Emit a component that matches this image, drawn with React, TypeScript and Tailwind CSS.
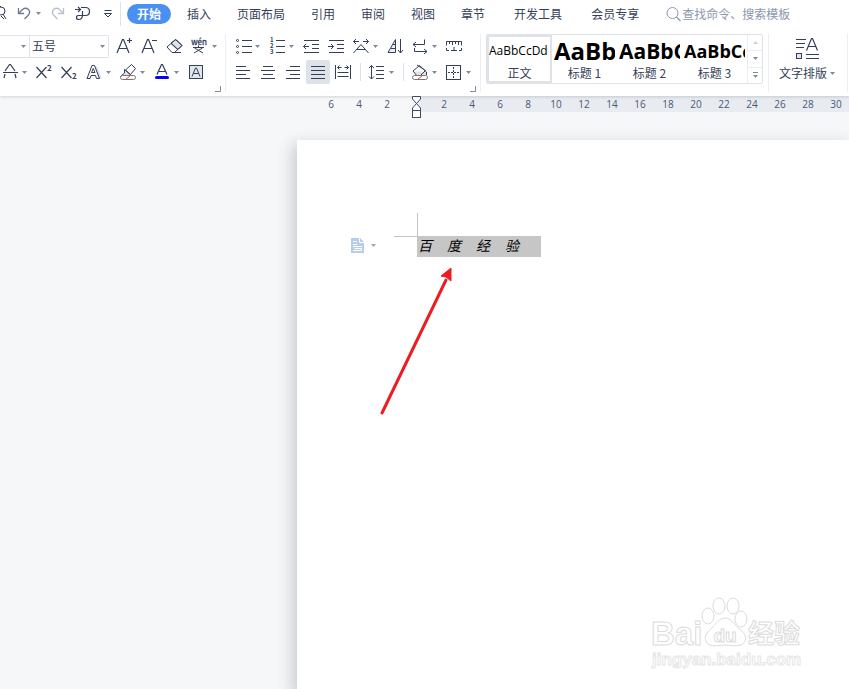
import type { ReactNode } from 'react';
import clsx from 'clsx';

const TABS = [
  { label: '开始', className: 'mx-[3px] rounded-full bg-[#4a90f2] px-[10px] font-bold text-white' },
  { label: '插入', className: 'px-[13px]' },
  { label: '页面布局', className: 'px-[13px]' },
  { label: '引用', className: 'px-[13px]' },
  { label: '审阅', className: 'px-[13px]' },
  { label: '视图', className: 'px-[13px]' },
  { label: '章节', className: 'px-[13px]' },
  { label: '开发工具', className: 'pr-[13px] pl-4' },
  { label: '会员专享', className: 'pr-[13px] pl-4' },
];

const STYLES = [
  { label: '正文', sample: 'AaBbCcDd', className: 'text-xs' },
  { label: '标题 1', sample: 'AaBb', className: 'text-2xl font-bold' },
  { label: '标题 2', sample: 'AaBbC', className: 'text-[21px] font-bold' },
  { label: '标题 3', sample: 'AaBbCc', className: 'text-lg font-bold' },
];

const RULER_LEFT = [6, 4, 2];
const RULER_RIGHT = [2, 4, 6, 8, 10, 12, 14, 16, 18, 20, 22, 24, 26, 28, 30];

const ICONS: Record<string, ReactNode> = {
  find: (
    <>
      <circle cx="14" cy="9" r="4"/>
      <path d="M16 12 L19 17 M10 5 L14 4.5 M14 14 L17 17"/>
    </>
  ),
  undo: (
    <g stroke="#6d7994" strokeWidth="1.3">
      <path d="M6.5 6 V11.5 H12"/>
      <path d="M7 11 L10.5 7.5 Q13.5 5 16.5 7.5 Q19 10.5 16 13.5 L12.5 17"/>
    </g>
  ),
  redo: (
    <g stroke="#b9bfca" strokeWidth="1.3">
      <path d="M17.5 6 V11.5 H12"/>
      <path d="M17 11 L13.5 7.5 Q10.5 5 7.5 7.5 Q5 10.5 8 13.5 L11.5 17"/>
    </g>
  ),
  painter: (
    <g strokeWidth="1.2">
      <path d="M4 7.5 H9 M7 5 L9.5 7.5 L7 10"/>
      <path d="M10 5.5 H14.500 Q18.5 5.5 18.5 9.500 Q18.5 13.5 14.500 13.5 H7.500 Q5.5 13.5 5.5 15.5 Q5.5 17.5 7.500 17.5 Q11.5 17.5 11.5 13 V9"/>
    </g>
  ),
  more: (
    <>
      <path d="M8.5 8.5 H15.5"/>
      <path d="M8.5 11.5 H15.5 L12 15 Z"/>
    </>
  ),
  grow: <path d="M4 19 L9.5 5.5 H10.5 L16 19 M6 14.5 H14 M14 6.5 H19 M16.5 4 V9" strokeWidth="1.2"/>,
  shrink: <path d="M4 19 L9.5 5.5 H10.5 L16 19 M6 14.5 H14 M14 6.5 H19" strokeWidth="1.2"/>,
  eraser: (
    <>
      <path d="M8 9 L13 5.5 L19 11.5 L15 15.5 Z" fill="#dfe3e9"/>
      <path d="M4 13 L12.5 5.5 L19 11.5 L11.5 18.5 H9 Z M8 9.5 L14.5 15.5 M9 18.5 H18"/>
    </>
  ),
  phonetic: (
    <>
      <text x="11" y="11" textAnchor="middle" fontSize="8" fill="currentColor" strokeWidth="0.3">wén</text>
      <path d="M5 13.5 H16 M10.5 11.5 V13 M6.5 14 L15 19 M14.5 14 L6 19"/>
    </>
  ),
  strike: <path d="M7 11 L11.5 4.5 H12.5 L17 11 M5 12.5 H20 M7 14 L6 18 M17 14 L18 18" strokeWidth="1.2"/>,
  superscript: (
    <>
      <path d="M4.5 7 L14.5 18 M14.5 7 L4.5 18" strokeWidth="1.2"/>
      <text x="15" y="11" fontSize="8" fontWeight="bold" fill="currentColor" stroke="none">2</text>
    </>
  ),
  subscript: (
    <>
      <path d="M4.5 7 L14.5 18 M14.5 7 L4.5 18" strokeWidth="1.2"/>
      <text x="15" y="19" fontSize="8" fontWeight="bold" fill="currentColor" stroke="none">2</text>
    </>
  ),
  outline: (
    <>
      <path d="M12.5 5.5 L17 18.5 H20 L15.5 7 Z" fill="#dde1e8" stroke="none"/>
      <path d="M5 18.5 L10 5.5 H12.5 L17.5 18.5 H14.5 L13.5 15.5 H9 L8 18.5 Z M9.5 12.5 H13 L11.2 8.5 Z"/>
    </>
  ),
  highlight: (
    <>
      <path d="M9.5 10 L15.5 4.5 L19.5 8.5 L14.5 14.5 Z" fill="#fff"/>
      <path d="M8.5 9.5 L14.5 15 L12.5 16.5 H4.5 L8.5 13 Z" fill="#dfe3e9"/>
      <rect x="4.5" y="15.5" width="15" height="4" rx="2" fill="#fff" stroke="#777"/>
      <path d="M10 19 L14 16" stroke="#e84a4a"/>
    </>
  ),
  color: (
    <>
      <path d="M7 14.5 L11.5 4.5 H12.5 L17 14.5 M8.5 11.5 H15.5" strokeWidth="1.2"/>
      <rect x="5" y="16" width="14" height="3" rx="1.5" fill="#0000ff" stroke="none"/>
    </>
  ),
  shade: (
    <>
      <rect x="5.5" y="5.5" width="13" height="13" fill="#e3e7ec"/>
      <path d="M8 16.5 L11.5 8 H12.5 L16 16.5 M9.5 13.5 H14.5"/>
    </>
  ),
  bullets: (
    <>
      <path d="M11 6.5 H21 M11 12.5 H21 M11 18.5 H21"/>
      <circle cx="6.5" cy="6.5" r="1"/>
      <circle cx="6.5" cy="12.5" r="1"/>
      <circle cx="6.5" cy="18.5" r="1"/>
    </>
  ),
  numbers: (
    <>
      <path d="M11 6.5 H20 M11 12.5 H20 M11 18.5 H20"/>
      <g fontSize="6" fontWeight="bold" fill="currentColor" stroke="none">
        <text x="5" y="8">1</text>
        <text x="5" y="14">2</text>
        <text x="5" y="20">3</text>
      </g>
    </>
  ),
  outdent: <path d="M5 6.5 H20 M13 10.5 H20 M13 14.5 H20 M5 18.5 H20 M4.5 12.5 H10 M7 10 L4.5 12.5 L7 15"/>,
  indent: <path d="M5 6.5 H20 M13 10.5 H20 M13 14.5 H20 M5 18.5 H20 M4 12.5 H9.5 M7 10 L9.5 12.5 L7 15"/>,
  scale: (
    <>
      <path d="M4.5 7.5 H10 M14 7.5 H19.5 M7 5 L4.5 7.5 L7 10 M17 5 L19.5 7.5 L17 10"/>
      <path d="M4.5 19 L12 10.5 L19.5 19 M8 15.5 H16"/>
    </>
  ),
  sort: (
    <>
      <path d="M5 18.5 L12.5 5.5 V18.5 Z M10 10.5 H12 M8 14.5 H12" fill="#eceff3"/>
      <path d="M17.5 5 V19 M15 16 L17.5 19 L20 16"/>
    </>
  ),
  breaks: <path d="M16.5 5.5 V10.5 H5 M8 8 L5 10.5 L8 13 M6.5 14 V17.5 H19 M16 15 L19 17.5 L16 20"/>,
  tabs: <path d="M4.5 11.5 V7.5 H19.5 V11.5 M7.5 8 V10 M10.5 8 V11 M13.5 8 V10 M16.5 8 V11 M4.5 14 V16.5 H7 M9 16.5 H15 M12 16 V13 M17 16.5 H19.5 V14"/>,
  left: <path d="M5 6.5 H15 M5 10.5 H19 M5 14.5 H15 M5 18.5 H19"/>,
  center: <path d="M7 6.5 H17 M5 10.5 H19 M7 14.5 H17 M5 18.5 H19"/>,
  right: <path d="M9 6.5 H19 M5 10.5 H19 M9 14.5 H19 M5 18.5 H19"/>,
  justify: <path d="M5 6.5 H19 M5 10.5 H19 M5 14.5 H19 M5 18.5 H19"/>,
  distribute: <path d="M4.5 5 V19 M19.5 5 V19 M6.5 7.5 H10.5 M13.5 7.5 H17.5 M8.5 5.5 L6.5 7.5 L8.5 9.5 M15.5 5.5 L17.5 7.5 L15.5 9.5 M6.5 12.5 H17.5 M6.5 16.5 H17.5"/>,
  spacing: <path d="M11 6.5 H19 M11 10.5 H19 M11 14.5 H19 M11 18.5 H19 M6.5 5.5 V19 M4 8 L6.5 5.5 L9 8 M4 16.5 L6.5 19 L9 16.5"/>,
  bucket: (
    <>
      <path d="M5.5 11.5 H18 L18 15 H8 Z" fill="#dfe3e9" stroke="none"/>
      <path d="M9 5 L17.5 10.5 L12 16 H9 L5 11 L11.5 5.5 L18.5 12 V15"/>
      <rect x="4.5" y="15.5" width="15" height="4" rx="2" fill="#fff" stroke="#777"/>
      <path d="M10 19 L14 16" stroke="#e84a4a"/>
    </>
  ),
  borders: (
    <>
      <rect x="4.5" y="5.5" width="14" height="14"/>
      <path d="M11.5 7 V18 M6 12.5 H17" strokeDasharray="2 1"/>
    </>
  ),
};

function Caret({ className = 'text-[#8089a0]' }: { className?: string }) {
  return (
    <svg width="5" height="3" viewBox="0 0 5 3" fill="currentColor" className={clsx('shrink-0', className)}>
      <path d="M0 0 H5 L2.5 3 Z"/>
    </svg>
  );
}

function Tool({ icon, label, menu, active }: { icon: string; label: string; menu?: boolean; active?: boolean }) {
  return (
    <button type="button" aria-label={label} className="flex shrink-0 items-center">
      <span className={clsx('block size-6', active && 'rounded-xs bg-[#dde3e8]')}>
        <svg width="24" height="24" viewBox="0 0 24 24" fill="none" stroke="currentColor">
          {ICONS[icon]}
        </svg>
      </span>
      {menu && <span className="w-[9px]"><Caret/></span>}
    </button>
  );
}

function Divider() {
  return (
    <span className="flex w-2 justify-center">
      <span className="h-[18px] w-px bg-[#dfe2e7]"/>
    </span>
  );
}

function Launcher() {
  return (
    <button type="button" aria-label="更多设置" className="mt-0.5 mr-1 self-end text-[#8089a0]">
      <svg width="6" height="6" viewBox="0 0 6 6" fill="none" stroke="currentColor">
        <path d="M5.5 0 V5.5 H0"/>
      </svg>
    </button>
  );
}

function MenuBar() {
  return (
    <nav className="flex h-[27px] items-center overflow-hidden">
      <div className="-ml-[13px] flex shrink-0 items-center gap-px">
        <Tool icon="find" label="查找"/>
        <Tool icon="undo" label="撤销" menu/>
        <Tool icon="redo" label="恢复"/>
        <Tool icon="painter" label="格式刷"/>
        <Tool icon="more" label="自定义"/>
      </div>
      <span className="mr-[3px] h-6 w-px shrink-0 bg-[#dfe2e7]"/>
      {TABS.map((tab) => (
        <button key={tab.label} type="button" className={clsx('h-5 shrink-0 leading-5', tab.className)}>
          {tab.label}
        </button>
      ))}
      <label className="ml-[14px] flex min-w-0 flex-1 items-center text-[#8c97ae]">
        <svg width="16" height="16" viewBox="0 0 16 16" fill="none" stroke="currentColor" className="shrink-0">
          <circle cx="6.5" cy="7" r="5.5"/>
          <path d="M10.5 11 L14.5 15" strokeWidth="1.3"/>
        </svg>
        <input
          aria-label="搜索"
          placeholder="查找命令、搜索模板"
          className="w-full min-w-0 bg-transparent outline-none placeholder:text-[#8c97ae]"
        />
      </label>
    </nav>
  );
}

function FontGroup() {
  return (
    <section className="flex w-[226px] shrink-0 flex-col border-r border-[#eceef1]">
      <div className="flex h-6 items-center gap-px">
        <div className="mr-[3px] flex h-[23px] w-[109px] rounded-r-xs border border-l-0 border-[#dfe2e7]">
          <div className="relative flex w-[30px] items-center border-r border-[#dfe2e7]">
            <select aria-label="字体" className="size-full appearance-none">
              <option> </option>
            </select>
            <Caret className="pointer-events-none absolute right-[3px] text-[#8089a0]"/>
          </div>
          <div className="relative flex flex-1 items-center">
            <select aria-label="字号" className="size-full appearance-none pl-0.5">
              <option>五号</option>
            </select>
            <Caret className="pointer-events-none absolute right-[3px] text-[#8089a0]"/>
          </div>
        </div>
        <Tool icon="grow" label="增大字号"/>
        <Tool icon="shrink" label="减小字号"/>
        <Tool icon="eraser" label="清除格式"/>
        <Tool icon="phonetic" label="拼音指南" menu/>
      </div>
      <div className="mt-0.5 -ml-0.5 flex h-6 items-center gap-px">
        <Tool icon="strike" label="删除线" menu/>
        <Tool icon="superscript" label="上标"/>
        <Tool icon="subscript" label="下标"/>
        <Tool icon="outline" label="文字效果" menu/>
        <Tool icon="highlight" label="突出显示" menu/>
        <Tool icon="color" label="字体颜色" menu/>
        <Tool icon="shade" label="字符底纹"/>
      </div>
      <Launcher/>
    </section>
  );
}

function ParagraphGroup() {
  return (
    <section className="flex w-[255px] shrink-0 flex-col border-r border-[#eceef1] pl-[5px]">
      <div className="flex h-6 items-center gap-px">
        <Tool icon="bullets" label="项目符号" menu/>
        <Tool icon="numbers" label="编号" menu/>
        <Tool icon="outdent" label="减少缩进"/>
        <Tool icon="indent" label="增加缩进"/>
        <Tool icon="scale" label="中文版式" menu/>
        <Tool icon="sort" label="排序"/>
        <Tool icon="breaks" label="段落标记" menu/>
        <Tool icon="tabs" label="制表位"/>
      </div>
      <div className="mt-0.5 flex h-6 items-center gap-px">
        <Tool icon="left" label="左对齐"/>
        <Tool icon="center" label="居中"/>
        <Tool icon="right" label="右对齐"/>
        <Tool icon="justify" label="两端对齐" active/>
        <Tool icon="distribute" label="分散对齐"/>
        <Divider/>
        <Tool icon="spacing" label="行距" menu/>
        <Divider/>
        <Tool icon="bucket" label="底纹颜色" menu/>
        <Tool icon="borders" label="边框" menu/>
      </div>
      <Launcher/>
    </section>
  );
}

function StyleGallery() {
  return (
    <section className="flex shrink-0 items-start border-r border-[#eceef1] px-[5px]">
      <div className="flex h-[50px] rounded-xs border border-[#dfe2e7]">
        {STYLES.map((style, i) => (
          <button
            key={style.label}
            type="button"
            className={clsx(
              'flex w-[65px] flex-col border-2',
              i === 0 ? 'border-[#dfe2e7]' : 'border-transparent'
            )}
          >
            <span className={clsx('block w-full overflow-hidden', style.className)}>
              <span className="flex h-7 items-center font-['Open_Sans','Noto_Sans',sans-serif] leading-7 whitespace-nowrap text-black">
                {style.sample}
              </span>
            </span>
            <span className="w-full leading-4">{style.label}</span>
          </button>
        ))}
        <div className="flex w-[15px] flex-col divide-y divide-[#eceef1] border-l border-[#eceef1]">
          <button type="button" aria-label="上一行" className="flex flex-1 items-center justify-center">
            <Caret className="rotate-180 text-[#cdd2dc]"/>
          </button>
          <button type="button" aria-label="下一行" className="flex flex-1 items-center justify-center">
            <Caret/>
          </button>
          <button type="button" aria-label="展开样式" className="flex flex-1 flex-col items-center justify-center gap-0.5">
            <span className="h-px w-[5px] bg-[#8089a0]"/>
            <Caret/>
          </button>
        </div>
      </div>
    </section>
  );
}

function Ribbon() {
  return (
    <div className="flex overflow-hidden pt-[7px] pb-1">
      <FontGroup/>
      <ParagraphGroup/>
      <StyleGallery/>
      <section className="border-r border-[#eceef1] pr-3 pl-[10px]">
        <button type="button" className="flex flex-col items-center">
          <svg width="26" height="30" viewBox="0 0 26 30" fill="none" stroke="currentColor">
            <path d="M2 5.5 H12 M2 9.5 H11 M2 13.5 H10 M12 20.5 H25 M12 24.5 H25"/>
            <rect x="2.5" y="19.5" width="5" height="5" fill="#e3e7ec"/>
            <path d="M12.5 16.5 L17.5 4.5 H18.5 L23.5 16.5 M14.5 12.5 H21.5" strokeWidth="1.2"/>
          </svg>
          <span className="flex items-center gap-[3px] leading-[18px] whitespace-nowrap">
            文字排版
            <Caret/>
          </span>
        </button>
      </section>
    </div>
  );
}

function Ruler() {
  return (
    <div className="flex h-4 text-center font-['Open_Sans','Noto_Sans',sans-serif] text-[10px] leading-4 text-[#4a5675]">
      <div className="relative flex w-[417px] shrink-0 justify-end pr-4">
        {RULER_LEFT.map((n) => <span key={n} className="w-7">{n}</span>)}
        <svg width="11" height="23" viewBox="0 0 11 23" fill="#fff" stroke="#3e4a66" className="absolute top-0 -right-[5px] z-10">
          <path d="M1.5 0.5 H9.5 V3 L5.5 7.5 L1.5 3 Z M5.5 7.5 L9.5 12 V14.5 H1.5 V12 Z"/>
          <rect x="1.5" y="14.5" width="8" height="7"/>
        </svg>
      </div>
      <div className="flex min-w-0 flex-1 overflow-hidden bg-[#e8ecf1] pl-[13px]">
        {RULER_RIGHT.map((n) => <span key={n} className="w-7 shrink-0">{n}</span>)}
      </div>
    </div>
  );
}

function Watermark() {
  return (
    <svg
      width="156" height="78" viewBox="0 0 156 78" fill="#fff" stroke="#dcdcdc"
      className="absolute right-11 bottom-4 font-['Liberation_Sans','Noto_Sans_CJK_SC',sans-serif]"
    >
      <text x="2" y="50" fontSize="33" fontWeight="bold">Bai</text>
      <ellipse cx="59" cy="21" rx="6" ry="8"/>
      <ellipse cx="70" cy="11" rx="6" ry="8"/>
      <ellipse cx="84" cy="11" rx="6" ry="8"/>
      <ellipse cx="92" cy="24" rx="6" ry="8"/>
      <path d="M76 23 C70 23 67 29 63 33 C57 38 55 42 57 46 C59 52 66 51 76 50 C86 51 93 52 96 46 C98 41 95 37 89 33 C85 29 82 23 76 23 Z"/>
      <text x="76" y="47" textAnchor="middle" fontSize="19" fontWeight="bold">du</text>
      <text x="99" y="48" fontSize="26" fontWeight="bold">经验</text>
      <text x="3" y="70" fontSize="17" fontWeight="bold" stroke="#e6e6e6">jingyan.baidu.com</text>
    </svg>
  );
}

function Page() {
  return (
    <main className="mt-7 ml-[297px] flex-1 bg-white pt-[73px] pl-[54px] shadow-[-3px_6px_14px_2px_rgba(60,60,60,0.22)]">
      <div className="flex items-end">
        <div className="mr-[18px] flex items-center gap-[7px] pb-1">
          <svg width="13" height="15" viewBox="0 0 13 15" fill="none" stroke="#fff">
            <path d="M0 0 H9 L13 4 V15 H0 Z" fill="#b7cdec" stroke="none"/>
            <path d="M8.5 0 V4.5 H13 M2 3.5 H6 M2 6.5 H6 M2 8.5 H11 M2 12.5 H5 M3.5 10.5 H10.5 V12.5 H5"/>
          </svg>
          <Caret className="text-[#a6a6a6]"/>
        </div>
        <div>
          <div className="h-6 w-6 border-r border-b border-[#c4c4c4]"/>
          <div className="h-5"/>
        </div>
        <p className="-ml-px flex h-[21px] w-[124px] gap-[15px] bg-[#c6c6c6] pl-px text-sm leading-[19px] text-black italic">
          <span>百</span>
          <span>度</span>
          <span>经</span>
          <span>验</span>
        </p>
      </div>
    </main>
  );
}

export default function App() {
  return (
    <div className="relative flex min-h-screen flex-col overflow-hidden bg-[#f5f7f9] font-['Noto_Sans_CJK_SC',sans-serif] text-xs text-[#333e58]">
      <header className="relative z-10 bg-white shadow-[0_1px_3px_rgba(0,0,0,0.15)]">
        <MenuBar/>
        <Ribbon/>
      </header>
      <Ruler/>
      <Page/>

      {/* Pointer from the page body to the selected text */}
      <svg width="76" height="150" viewBox="0 0 76 150" className="absolute top-[266px] left-[379px]">
        <path d="M3 147 L67 14" stroke="#ed1c24" strokeWidth="3" strokeLinecap="round"/>
        <path d="M72 2 L62 10 L67 11 L72 15 Z" fill="#ed1c24" stroke="#ed1c24"/>
      </svg>
      <Watermark/>
    </div>
  );
}
